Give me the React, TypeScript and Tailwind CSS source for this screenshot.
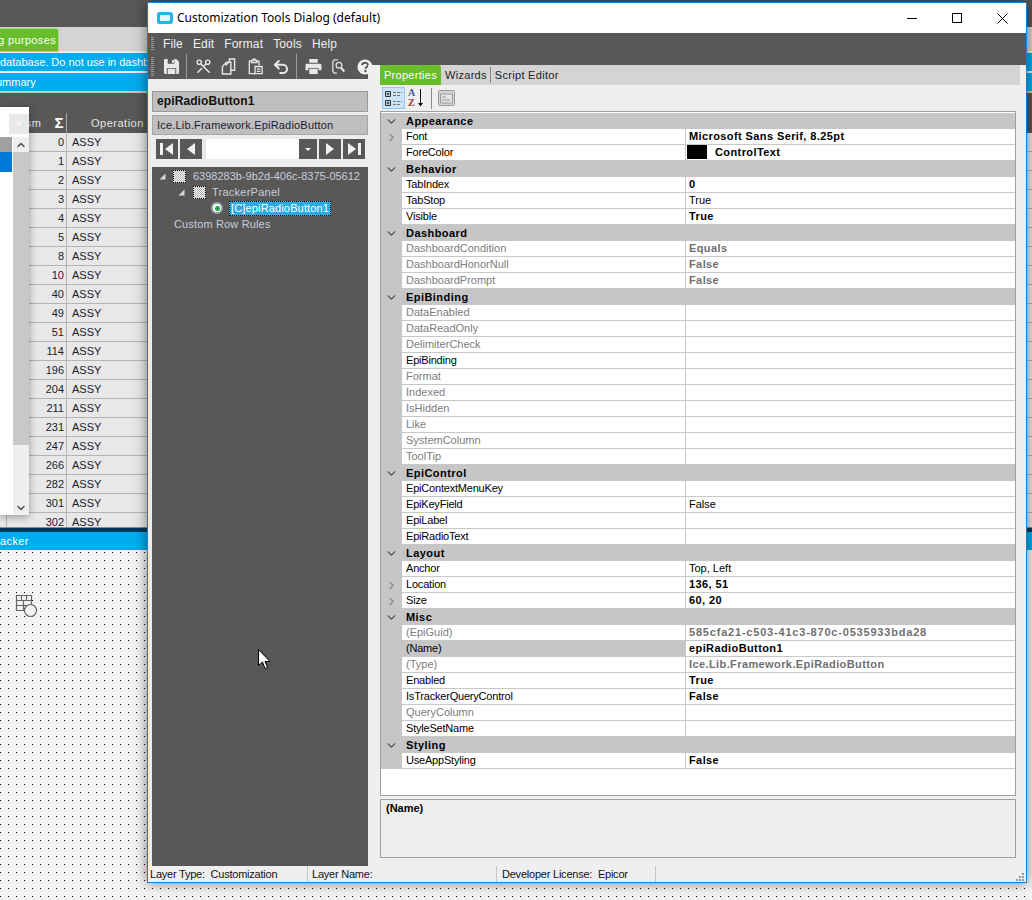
import React from 'react';
import { ChevronDown, ChevronRight, ChevronUp, Scissors, Undo2 } from 'lucide-react';

type Row = {
  name: string;
  value?: string;
  cat?: boolean;
  bold?: boolean;
  off?: boolean;
  expand?: boolean;
  swatch?: boolean;
  selected?: boolean;
  wide?: boolean;
};

const ROWS: Row[] = [
  { name: 'Appearance', cat: true },
  { name: 'Font', value: 'Microsoft Sans Serif, 8.25pt', bold: true, expand: true },
  { name: 'ForeColor', value: 'ControlText', bold: true, swatch: true },
  { name: 'Behavior', cat: true },
  { name: 'TabIndex', value: '0', bold: true },
  { name: 'TabStop', value: 'True' },
  { name: 'Visible', value: 'True', bold: true },
  { name: 'Dashboard', cat: true },
  { name: 'DashboardCondition', value: 'Equals', bold: true, off: true },
  { name: 'DashboardHonorNull', value: 'False', bold: true, off: true },
  { name: 'DashboardPrompt', value: 'False', bold: true, off: true },
  { name: 'EpiBinding', cat: true },
  { name: 'DataEnabled', off: true },
  { name: 'DataReadOnly', off: true },
  { name: 'DelimiterCheck', off: true },
  { name: 'EpiBinding' },
  { name: 'Format', off: true },
  { name: 'Indexed', off: true },
  { name: 'IsHidden', off: true },
  { name: 'Like', off: true },
  { name: 'SystemColumn', off: true },
  { name: 'ToolTip', off: true },
  { name: 'EpiControl', cat: true },
  { name: 'EpiContextMenuKey' },
  { name: 'EpiKeyField', value: 'False' },
  { name: 'EpiLabel' },
  { name: 'EpiRadioText' },
  { name: 'Layout', cat: true },
  { name: 'Anchor', value: 'Top, Left' },
  { name: 'Location', value: '136, 51', bold: true, expand: true },
  { name: 'Size', value: '60, 20', bold: true, expand: true },
  { name: 'Misc', cat: true },
  { name: '(EpiGuid)', value: '585cfa21-c503-41c3-870c-0535933bda28', bold: true, off: true, wide: true },
  { name: '(Name)', value: 'epiRadioButton1', bold: true, selected: true },
  { name: '(Type)', value: 'Ice.Lib.Framework.EpiRadioButton', bold: true, off: true },
  { name: 'Enabled', value: 'True', bold: true },
  { name: 'IsTrackerQueryControl', value: 'False', bold: true },
  { name: 'QueryColumn', off: true },
  { name: 'StyleSetName' },
  { name: 'Styling', cat: true },
  { name: 'UseAppStyling', value: 'False', bold: true },
];

const SEQ = [0, 1, 2, 3, 4, 5, 8, 10, 40, 49, 51, 114, 196, 204, 211, 231, 247, 266, 282, 301, 302];

const Grip = ({ h }: { h: string }) => (
  <div className={`w-[3px] ${h} mr-[5px] shrink-0 bg-[repeating-linear-gradient(#9a9a98_0_1px,transparent_1px_2px)]`} />
);

const Checker = () => (
  <span className="w-[13px] h-[13px] shrink-0 border border-dotted border-black bg-[repeating-conic-gradient(#b5b5b5_0_25%,#f5f5f5_0_50%)] bg-[length:2px_2px]" />
);

const TreeArrow = () => (
  <svg width="7" height="7" viewBox="0 0 7 7" className="shrink-0">
    <path d="M6.5 0.5V6.5H0.5Z" fill="#d8d8d8" />
  </svg>
);

const NavBtn = ({ d }: { d: string }) => (
  <div className="w-[22px] h-[20px] bg-[#595856] flex items-center justify-center shrink-0">
    <svg width="18" height="16" viewBox="0 0 18 16">
      <path d={d} fill="#f0f0f0" />
    </svg>
  </div>
);

const PropRow = ({ row }: { row: Row }) => {
  if (row.cat) {
    return (
      <div className="h-4 bg-[#c6c6c6] flex items-center text-[11px] font-bold text-black">
        <div className="w-[21px] flex justify-center">
          <ChevronDown size={13} strokeWidth={2.5} className="text-[#505050]" />
        </div>
        <span className="pl-1 tracking-[0.45px]">{row.name}</span>
      </div>
    );
  }
  return (
    <div className="h-4 flex bg-white text-[11px]">
      <div className="w-[21px] bg-[#c6c6c6] flex justify-center items-center shrink-0">
        {row.expand && <ChevronRight size={13} strokeWidth={2.5} className="text-[#8c8c8c]" />}
      </div>
      <div
        className={`w-[283px] shrink-0 pl-1 leading-[15px] border-b border-[#c8c8c8] ${
          row.selected ? 'bg-[#c6c6c6] border-[#c6c6c6]' : ''
        } ${row.off ? 'text-[#7d7d7d]' : 'text-black tracking-[-0.2px]'}`}
      >
        {row.name}
      </div>
      <div
        className={`flex-1 flex items-start border-l border-b border-[#c8c8c8] pl-[3px] leading-[15px] ${
          row.off ? 'text-[#6f6f6f]' : 'text-black'
        } ${row.bold ? 'font-bold' : ''} ${row.wide ? 'tracking-[0.8px]' : row.bold ? 'tracking-[0.4px]' : ''}`}
      >
        {row.swatch && <span className="w-5 h-[14px] bg-black mr-2 -ml-[2px] shrink-0" />}
        {row.value}
      </div>
    </div>
  );
};

export default function App() {
  return (
    <div className="relative w-[1032px] h-[900px] overflow-hidden bg-[#f3f3f6] font-['Liberation_Sans',Arial,sans-serif] text-[11px]">
      {/* application behind the dialog */}
      <div className="h-[27px] bg-[#595856]" />
      <div className="h-[24px] bg-[#d4d4d4] flex">
        <div className="w-[59px] h-[24px] mt-[1px] overflow-hidden bg-[#67bd2a] border border-[#a5dc7c] border-l-0 rounded-tr-[3px] flex justify-end items-center pr-[2px] text-white text-[11px] tracking-[0.35px] whitespace-nowrap">
          Testing purposes
        </div>
      </div>
      <div className="h-[2px] bg-[#efefef]" />
      <div className="h-[18px] bg-[#00adee] text-white text-[11px] leading-[18px] whitespace-nowrap overflow-hidden">
        database. Do not use in dashboards
      </div>
      <div className="h-[2px] bg-[#efefef]" />
      <div className="h-[18px] bg-[#00adee] text-white text-[11px] leading-[18px] whitespace-nowrap overflow-hidden">
        <span className="-ml-[4px] inline-block">ummary</span>
      </div>
      <div className="h-[2px] bg-[#c4c4c4]" />
      <div className="h-[20px] bg-[#595856]" />
      <div className="h-[414px] overflow-hidden">
        <div className="h-5 bg-[#595856] flex text-[#e6e6e6] text-[11px] tracking-[0.5px] leading-[20px]">
          <div className="w-[67px] shrink-0 border-r border-[#a8a8a8] flex justify-end pr-[2px] gap-[13px]">
            <span>sm</span>
            <span className="font-bold text-[15px] text-white">Σ</span>
          </div>
          <div className="flex-1 pl-[24px]">Operation</div>
        </div>
        {SEQ.map(n => (
          <div key={n} className="h-[19px] flex bg-[#e8e8e8] border-b border-[#b4b4b4] text-[11px] text-[#1b1b2a] leading-[18px]">
            <div className="w-[7px] shrink-0 border-r border-[#b4b4b4]" />
            <div className="w-[60px] shrink-0 border-r border-[#b4b4b4] text-right pr-[2px]">{n}</div>
            <div className="pl-[5px]">ASSY</div>
          </div>
        ))}
      </div>
      <div className="h-[5px] bg-[#03365a] border-t border-[#8a8a8a]" />
      <div className="h-[18px] bg-[#00adee] text-white text-[11px] leading-[18px] tracking-[0.4px]">acker</div>
      <div className="relative h-[350px] bg-[conic-gradient(from_270deg_at_1px_1px,#000_25%,transparent_0)] bg-[length:8px_8px] bg-[position:0px_2px]">
        <svg width="26" height="26" viewBox="0 0 26 26" className="absolute left-[15px] top-[44px]" fill="none" stroke="#666" strokeWidth="1.2">
          <path d="M1.5 1.5H16.5V16.5H1.5ZM1.5 6.5H16.5M1.5 11.5H16.5M6.5 1.5V6.5M11.5 1.5V6.5M8.5 6.5V16.5" />
          <circle cx="15.5" cy="16.5" r="6" fill="#f3f3f6" />
        </svg>
      </div>

      {/* popup list over the grid */}
      <div className="absolute left-0 top-[107px] w-[29px] h-[408px] bg-white shadow-[0_2px_8px_rgba(0,0,0,0.35)] flex flex-col">
        <div className="h-[7px]" />
        <div className="flex justify-end h-[20px]">
          <div className="w-[20px] bg-[#e8e8e8] text-white text-[11px] leading-[18px] text-center">×</div>
        </div>
        <div className="flex-1 flex min-h-0 pt-[3px]">
          <div className="w-[12px] shrink-0">
            <div className="h-[15px] bg-[#a0a0a0]" />
            <div className="h-[20px] bg-[#0078d7]" />
          </div>
          <div className="w-[1px]" />
          <div className="flex-1 flex flex-col bg-[#efefef]">
            <div className="h-[15px] flex items-center justify-center">
              <ChevronUp size={12} strokeWidth={3} className="text-[#505050]" />
            </div>
            <div className="h-[293px] bg-[#c8c8c8]" />
            <div className="flex-1 flex items-end justify-center pb-[1px]">
              <ChevronDown size={12} strokeWidth={3} className="text-[#505050]" />
            </div>
          </div>
        </div>
      </div>

      {/* dialog window */}
      <div className="absolute left-[147px] top-[2px] w-[880px] h-[881px] flex flex-col bg-[#f1f1f3] border border-[#1d7fd1] shadow-[0_0_12px_rgba(0,0,0,0.5)]">
        <div className="h-[30px] bg-white flex items-center shrink-0">
          <svg width="16" height="12" viewBox="0 0 16 12" className="ml-[9px] mr-[4px] shrink-0">
            <rect x="0" y="0" width="16" height="12" rx="2.5" fill="#27b4ea" />
            <rect x="3" y="3" width="10" height="6" rx="1" fill="#e4f6fd" />
          </svg>
          <span className="font-['Noto_Sans',sans-serif] text-[12px] text-black">Customization Tools Dialog (default)</span>
          <div className="ml-auto flex items-center mr-[18px] gap-[35px]">
            <svg width="10" height="10" viewBox="0 0 10 10"><path d="M0 5.5H10" stroke="#000" /></svg>
            <svg width="10" height="10" viewBox="0 0 10 10"><rect x="0.5" y="0.5" width="9" height="9" fill="none" stroke="#000" /></svg>
            <svg width="11" height="11" viewBox="0 0 11 11"><path d="M0.5 0.5L10.5 10.5M10.5 0.5L0.5 10.5" stroke="#000" /></svg>
          </div>
        </div>

        <div className="h-[46px] bg-[#595856] shrink-0">
          <div className="h-[21px] flex items-center pl-[3px] text-[12px] text-[#efefef]">
            <Grip h="h-[14px]" />
            <div className="flex gap-[10px] pl-[4px] tracking-[0.15px]">
              <span>File</span>
              <span>Edit</span>
              <span>Format</span>
              <span>Tools</span>
              <span>Help</span>
            </div>
          </div>
          <div className="h-[25px] flex items-center pl-[3px] text-[#e8e8e8]">
            <Grip h="h-[20px]" />
            <svg width="17" height="17" viewBox="0 0 18 18" className="ml-[4px]">
              <path d="M1 2.5A1.5 1.5 0 0 1 2.5 1H14L17 4V15.500A1.500 1.500 0 0 1 15.500 17H2.500A1.500 1.500 0 0 1 1 15.500Z" fill="#e8e8e8" />
              <path d="M5 1H12V6H5ZM4 10.500H14V17H4Z" fill="#595856" />
              <path d="M9.500 2H11.500V5H9.500ZM5 11.500H13V17H5Z" fill="#e8e8e8" />
            </svg>
            <div className="w-[1px] h-[25px] bg-[#9a9a98] ml-[6px] mr-[8px]" />
            <Scissors size={17} className="rotate-90 mr-[9px]" />
            <svg width="15" height="17" viewBox="0 0 16 18" fill="none" stroke="currentColor" strokeWidth="1.500" className="mr-[12px]">
              <path d="M5 8L9 3.500V1H14.500V13H11M1.500 9L6 4.500H10.500V17H1.500Z" />
            </svg>
            <svg width="15" height="17" viewBox="0 0 17 18" fill="none" stroke="currentColor" strokeWidth="1.500" className="mr-[9px]">
              <path d="M4 3H1.500V17H8M10 3H12.500V8M4 4.500V2H6V0.800H8V2H10V4.500Z" />
              <path d="M8 9H16V17H8ZM10 12H14M10 14.500H14" fill="#595856" />
            </svg>
            <Undo2 size={18} strokeWidth={2.750} className="mr-[6px]" />
            <div className="w-[1px] h-[25px] bg-[#9a9a98] mr-[8px]" />
            <svg width="17" height="15" viewBox="0 0 17 16" className="mr-[10px]">
              <path d="M4 0H13V4H4ZM1.500 5H15.500A1.500 1.500 0 0 1 17 6.500V12H14V9.500H3V12H0V6.500A1.500 1.500 0 0 1 1.500 5ZM4 10.500H13V16H4Z" fill="currentColor" />
            </svg>
            <svg width="14" height="17" viewBox="0 0 17 18" fill="none" stroke="currentColor" strokeWidth="1.500" className="mr-[11px]">
              <path d="M7 1H3L1 3V15L3 17H6" />
              <circle cx="8.500" cy="7.500" r="3.500" />
              <path d="M11 10.500L15 15" strokeWidth="2.500" />
            </svg>
            <svg width="16" height="16" viewBox="0 0 18 18">
              <circle cx="9" cy="9" r="8.500" fill="#f2f2f2" />
              <path d="M5.800 7C5.800 3.300 12.300 3.200 12.300 6.800C12.300 9.100 9.500 9 9.500 11" fill="none" stroke="#595856" strokeWidth="2.200" />
              <circle cx="9.500" cy="13.600" r="1.400" fill="#595856" />
            </svg>
          </div>
        </div>

        <div className="flex-1 flex min-h-0">
          {/* left panel */}
          <div className="w-[220px] ml-0 pl-1 bg-[#ededed] rounded-tr-[6px] flex flex-col shrink-0">
            <div className="mt-[12px] h-[21px] bg-[#bfbfbf] border border-[#9a9a9a] pl-1 text-[12px] font-bold leading-[19px] text-[#111] tracking-[0.1px]">
              epiRadioButton1
            </div>
            <div className="mt-[3px] h-[20px] bg-[#bfbfbf] border border-[#a6a6a6] pl-1 text-[11px] leading-[18px] text-[#1e1a33] tracking-[0.2px]">
              Ice.Lib.Framework.EpiRadioButton
            </div>
            <div className="mt-[4px] h-[20px] flex pl-[4px] gap-[2px] pr-[3px] w-[216px]">
              <NavBtn d="M2 2H5V14H2ZM15 2V14L7 8Z" />
              <NavBtn d="M13 2V14L5 8Z" />
              <div className="flex-1 bg-white border-l-2 border-[#e5e5e5] flex">
                <div className="ml-auto w-[18px] bg-[#595856] flex items-center justify-center">
                  <svg width="6" height="3" viewBox="0 0 6 3"><path d="M0 0H6L3 3Z" fill="#f0f0f0" /></svg>
                </div>
              </div>
              <NavBtn d="M5 2V14L13 8Z" />
              <NavBtn d="M13 2H16V14H13ZM3 2V14L11 8Z" />
            </div>
            <div className="mt-[8px] flex-1 bg-[#595856] w-[216px] text-[#c5cede] text-[11px] tracking-[0.15px]">
              <div className="h-[17px] pt-[1px] flex items-center pl-[7px] whitespace-nowrap">
                <TreeArrow />
                <span className="w-[7px]" />
                <Checker />
                <span className="ml-[7px] tracking-[0px]">6398283b-9b2d-406c-8375-05612</span>
              </div>
              <div className="h-[16px] flex items-center pl-[26px]">
                <TreeArrow />
                <span className="w-[8px]" />
                <Checker />
                <span className="ml-[6px] tracking-[0.25px]">TrackerPanel</span>
              </div>
              <div className="h-[16px] flex items-center pl-[59px] gap-[6px]">
                <span className="w-[12px] h-[12px] rounded-full bg-white border-2 border-[#9aa7ad] flex items-center justify-center shrink-0">
                  <span className="w-[5px] h-[5px] rounded-full bg-[#1aa34a]" />
                </span>
                <span className="h-[15px] leading-[13px] px-[1px] bg-[#29abe2] text-white border border-dotted border-black whitespace-nowrap">
                  [C]epiRadioButton1
                </span>
              </div>
              <div className="h-[16px] leading-[16px] pl-[22px]">Custom Row Rules</div>
            </div>
          </div>

          {/* right panel */}
          <div className="w-[659px] flex flex-col bg-[#efefef] -mt-[14px] pl-[12px]">
            <div className="h-[20px] w-[640px] bg-[#d4d4d4] flex items-center text-[11px] text-[#222] tracking-[0.3px] shrink-0">
              <div className="w-[61px] h-full bg-[#67bd2a] text-white leading-[20px] text-center rounded-tr-[3px]">Properties</div>
              <div className="pl-1 pr-[3px] border-r border-[#8a8a8a]">Wizards</div>
              <div className="pl-1">Script Editor</div>
            </div>
            <div className="h-[26px] flex items-center pl-[2px] shrink-0">
              <div className="w-[23px] h-[22px] bg-[#cce4f7] border border-[#90c8f6] flex items-center justify-center">
                <svg width="19" height="18" viewBox="0 0 19 18" fill="none" stroke="#333">
                  <path d="M1.500 2.500H6.500V7.500H1.500ZM1.500 11.500H6.500V16.500H1.500ZM2.500 5H5.500M4 3.500V6.500M2.500 14H5.500M4 12.500V15.500" />
                  <path d="M9 3.500H18M9 6.500H16M9 12.500H18M9 15.500H16" stroke="#777" strokeDasharray="3 1" />
                </svg>
              </div>
              <svg width="20" height="22" viewBox="0 0 20 22" className="ml-[2px]">
                <text x="1" y="9" fontSize="10" fontFamily="Liberation Serif" fontWeight="bold" fill="#3d5a98">A</text>
                <text x="1" y="19" fontSize="10" fontFamily="Liberation Serif" fontWeight="bold" fill="#9a3838">Z</text>
                <path d="M13.500 2V17" stroke="#111" />
                <path d="M11 16H16L13.500 19.500Z" fill="#111" />
              </svg>
              <div className="w-[1px] h-[21px] bg-[#8c8c8c] ml-[4px]" />
              <svg width="17" height="16" viewBox="0 0 17 16" className="ml-[6px]" fill="#d4d4d4" stroke="#999">
                <rect x="0.500" y="0.500" width="16" height="15" rx="1" />
                <path d="M2.500 4H14.500V13H2.500ZM4 7H8M4 10H12" fill="#e4e4e4" />
              </svg>
            </div>
            <div className="w-[636px] h-[685px] pt-[1px] bg-white border border-[#a0a0a0] shrink-0 overflow-hidden">
              {ROWS.map(r => (
                <PropRow key={r.name + (r.cat ? '-cat' : '')} row={r} />
              ))}
            </div>
            <div className="w-[636px] h-[59px] mt-[3px] bg-[#efefef] border border-[#a0a0a0] px-[5px] text-[11px] font-bold text-black shrink-0">
              (Name)
            </div>
          </div>
        </div>

        <div className="h-[16px] flex bg-[#efefef] text-[11px] text-[#111] tracking-[-0.22px] leading-[16px] whitespace-pre shrink-0">
          <div className="w-[160px] pl-[2px] border-r border-[#c4c4c4]">Layer Type:  Customization</div>
          <div className="w-[189px] pl-[4px] border-r border-[#c4c4c4]">Layer Name:</div>
          <div className="w-[159px] pl-[5px] border-r border-[#c4c4c4]">Developer License:  Epicor</div>
          <div className="flex-1 flex justify-end items-end pr-[1px]">
            <svg width="10" height="10" viewBox="0 0 10 10" fill="#9a9a9a">
              <path d="M7 1h2v2H7zM4 4h2v2H4zM7 4h2v2H7zM1 7h2v2H1zM4 7h2v2H4zM7 7h2v2H7z" />
            </svg>
          </div>
        </div>
      </div>

      {/* mouse cursor */}
      <svg width="13" height="21" viewBox="0 0 13 21" className="absolute left-[258px] top-[649px]">
        <path d="M0.500 0.500V16.500L4.500 13L7 19.500L9.500 18.500L7 12.500H12Z" fill="#fff" stroke="#000" />
      </svg>
    </div>
  );
}
